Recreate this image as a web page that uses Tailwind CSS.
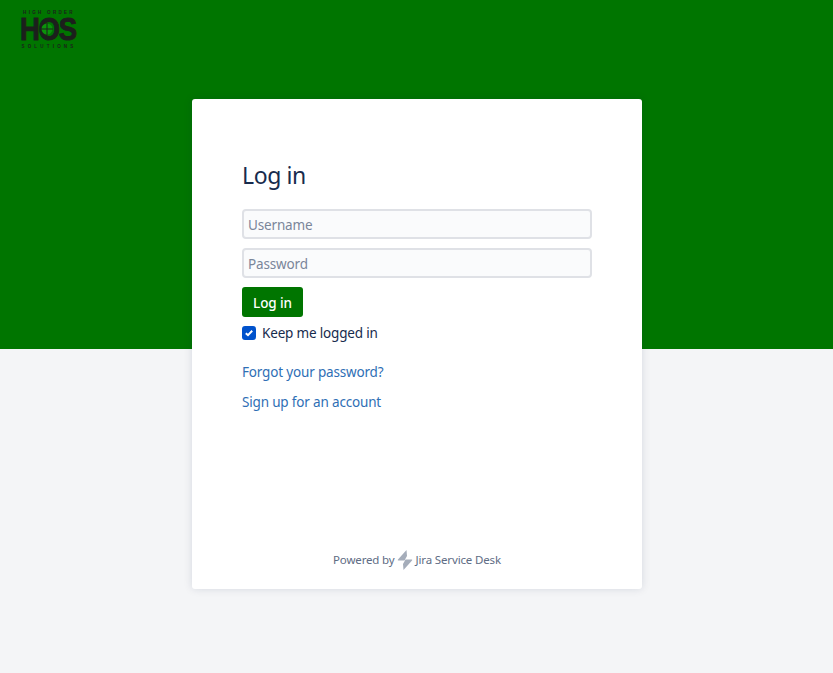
<!DOCTYPE html>
<html lang="en">
  <head>
    <meta charset="UTF-8" />
    <title>Log in</title>
    <script src="https://cdn.jsdelivr.net/npm/@tailwindcss/browser@4"></script>
  </head>
  <body class="h-[673px] overflow-hidden bg-[#f4f5f7] font-['Noto_Sans',sans-serif]">
    <!-- Green header band -->
    <header class="h-[349px] bg-[#007500] pl-[20px] pt-[10px]">
      <div class="flex w-[58px] flex-col items-center text-[#1c1f1c]">
        <span class="h-[5px] text-[4.5px] leading-[5px] font-bold tracking-[2.3px] whitespace-nowrap font-['Liberation_Sans',sans-serif]">HIGH ORDER</span>
        <div class="relative mt-[2px] h-[24px] w-[58px]">
          <span class="block origin-left scale-x-[0.86] text-[32px] leading-[24px] font-bold tracking-[-1.5px] [-webkit-text-stroke:1px_#1c1f1c] font-['Liberation_Sans',sans-serif]">HOS</span>
          <svg class="absolute left-[20px] top-[5px]" width="14" height="14" viewBox="0 0 14 14" fill="none">
            <circle cx="7" cy="7" r="5.5" fill="#0b930b" />
            <path d="M7 1v12M1 7h12" stroke="#1c1f1c" stroke-width="1" />
          </svg>
        </div>
        <span class="mt-[3px] h-[5px] text-[4.5px] leading-[5px] font-bold tracking-[3.2px] whitespace-nowrap font-['Liberation_Sans',sans-serif]">SOLUTIONS</span>
      </div>
    </header>

    <!-- Login card -->
    <main class="relative mt-[-250px] ml-[192px] flex h-[490px] w-[450px] flex-col rounded-[3px] bg-white px-[50px] pt-[59px] pb-[19px] shadow-[0_0_8px_rgba(9,30,66,0.13)]">
      <h1 class="mb-[17px] text-[23px] leading-[34px] tracking-[-0.4px] text-[#172b4d]">Log in</h1>
      <form class="flex flex-col">
        <input type="text" placeholder="Username" class="mb-[9px] h-[30px] w-full rounded-[4px] border-2 border-[#dfe1e6] bg-[#fafbfc] px-[4px] pt-[2px] text-[13.5px] tracking-[-0.15px] placeholder:text-[#7a869a]" />
        <input type="password" placeholder="Password" class="mb-[9px] h-[30px] w-full rounded-[4px] border-2 border-[#dfe1e6] bg-[#fafbfc] px-[4px] pt-[2px] text-[13.5px] tracking-[-0.15px] placeholder:text-[#7a869a]" />
        <button type="button" class="h-[30px] w-[61px] rounded-[3px] bg-[#007500] pt-[2px] text-[13.5px] font-medium tracking-[-0.1px] text-white">Log in</button>
        <label class="mt-[8px] flex h-[16px] items-center text-[13.5px] tracking-[-0.17px] text-[#172b4d]">
          <span class="mr-[6px] flex h-[14px] w-[14px] items-center justify-center rounded-[3px] bg-[#0052cc]">
            <svg width="12" height="12" viewBox="0 0 12 12" fill="none"><path d="M2.8 6.200 5 8.200 9.200 3.800" stroke="#fff" stroke-width="2" /></svg>
          </span>
          <span>Keep me logged in</span>
        </label>
      </form>
      <a href="#" class="mt-[21px] text-[13.5px] leading-[20px] tracking-[-0.17px] text-[#2f6fb5]">Forgot your password?</a>
      <a href="#" class="mt-[10px] text-[13.5px] leading-[20px] tracking-[-0.17px] text-[#2f6fb5]">Sign up for an account</a>
      <footer class="mt-auto flex items-center justify-center text-[11.5px] tracking-[-0.15px] text-[#5e6c84]">
        Powered by
        <svg class="ml-[2px] mr-[3px]" width="16" height="20" viewBox="0 0 16 20" fill="#a5adba">
          <path d="M9.500 0 1 9.500c-.4.5-.2 1 .4 1H7.500L10 6z" />
          <path d="M6.500 20l8.500-9.500c.4-.5.2-1-.4-1H8.500L6 14z" />
        </svg>
        Jira Service Desk
      </footer>
    </main>
  </body>
</html>
